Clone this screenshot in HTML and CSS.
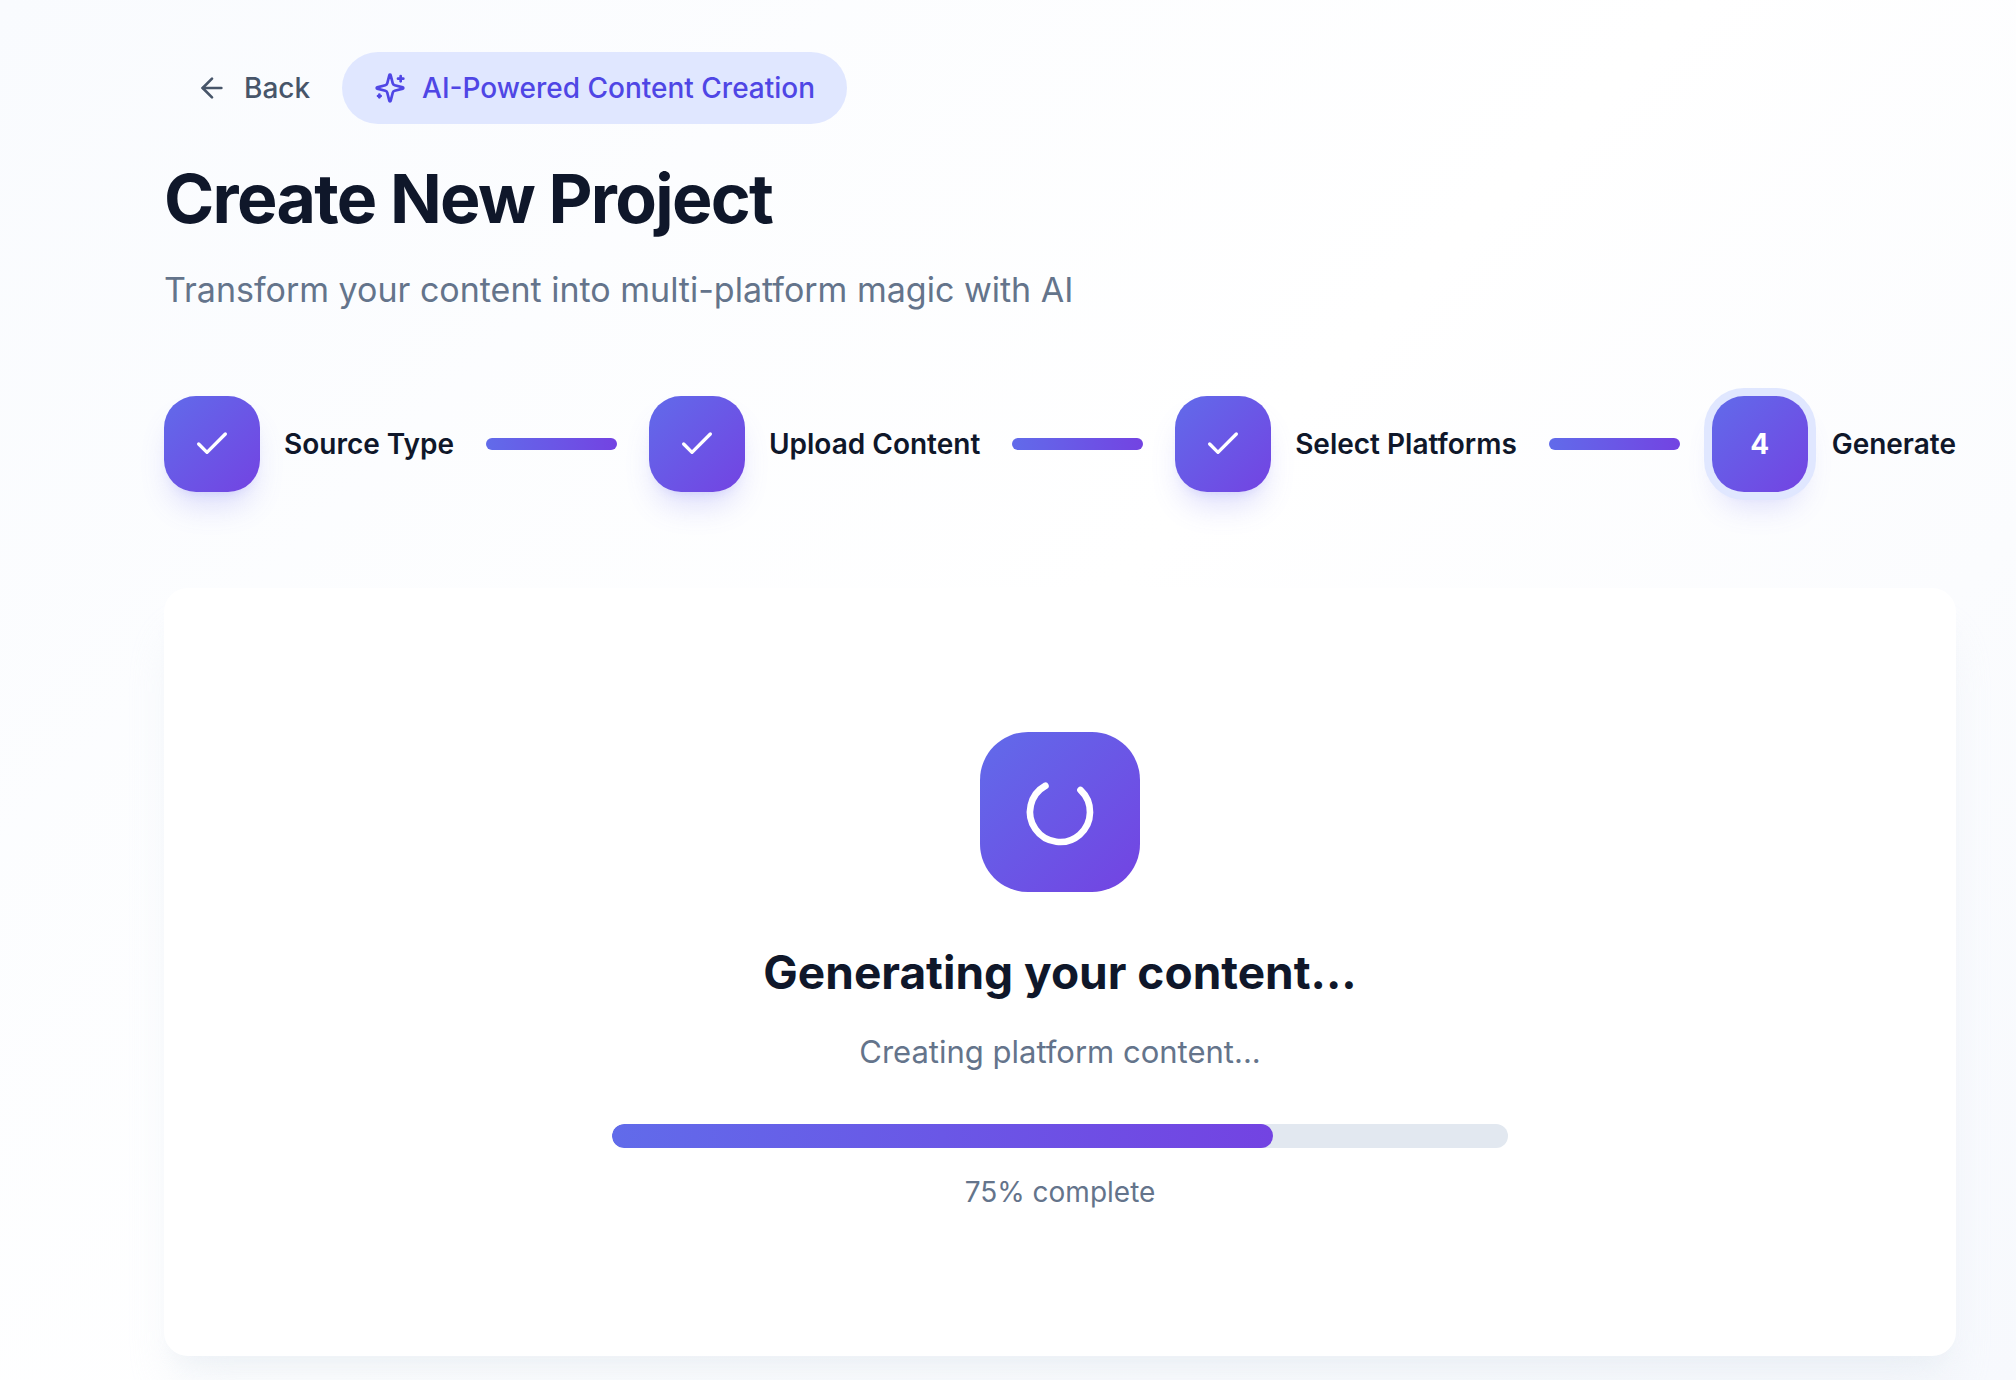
FILE: index.html
```html
<!DOCTYPE html>
<html lang="en">
<head>
<meta charset="utf-8">
<meta name="viewport" content="width=device-width, initial-scale=1">
<title>Create New Project</title>
<link rel="stylesheet" href="styles.css">
</head>
<body>
<main class="page">
  <header class="header">
    <div class="topbar">
      <button type="button" class="back">
        <svg class="icon" viewBox="0 0 24 24" aria-hidden="true"><path d="m12 19-7-7 7-7"/><path d="M19 12H5"/></svg>
        Back
      </button>
      <div class="badge">
        <svg class="icon" viewBox="0 0 24 24" aria-hidden="true"><path d="M9.937 15.5A2 2 0 0 0 8.5 14.063l-6.135-1.582a.5.5 0 0 1 0-.962L8.5 9.936A2 2 0 0 0 9.937 8.5l1.582-6.135a.5.5 0 0 1 .963 0L14.063 8.5A2 2 0 0 0 15.5 9.937l6.135 1.581a.5.5 0 0 1 0 .964L15.5 14.063a2 2 0 0 0-1.437 1.437l-1.582 6.135a.5.5 0 0 1-.963 0z"/><path d="M20 3v4"/><path d="M22 5h-4"/><path d="M4 17v2"/><path d="M5 18H3"/></svg>
        <span>AI-Powered Content Creation</span>
      </div>
    </div>
    <h1 class="title">Create New Project</h1>
    <p class="subtitle">Transform your content into multi-platform magic with AI</p>
  </header>

  <ol class="steps">
    <li class="step">
      <span class="step-mark"><svg class="check" viewBox="0 0 24 24" role="img" aria-label="Done"><path d="M20 6 9 17l-5-5"/></svg></span>
      <span class="step-label">Source Type</span>
      <span class="step-line"></span>
    </li>
    <li class="step">
      <span class="step-mark"><svg class="check" viewBox="0 0 24 24" role="img" aria-label="Done"><path d="M20 6 9 17l-5-5"/></svg></span>
      <span class="step-label">Upload Content</span>
      <span class="step-line"></span>
    </li>
    <li class="step">
      <span class="step-mark"><svg class="check" viewBox="0 0 24 24" role="img" aria-label="Done"><path d="M20 6 9 17l-5-5"/></svg></span>
      <span class="step-label">Select Platforms</span>
      <span class="step-line"></span>
    </li>
    <li class="step step-last" aria-current="step">
      <span class="step-mark step-mark-current">4</span>
      <span class="step-label">Generate</span>
    </li>
  </ol>

  <section class="card">
    <div class="spinner-tile">
      <svg class="spinner" viewBox="0 0 24 24" aria-hidden="true"><path transform="rotate(-47 12 12)" d="M21 12a9 9 0 1 1-6.219-8.56"/></svg>
    </div>
    <h2 class="card-title">Generating your content...</h2>
    <p class="card-text">Creating platform content...</p>
    <div class="progress" role="progressbar" aria-label="Generation progress" aria-valuemin="0" aria-valuemax="100" aria-valuenow="75">
      <div class="progress-fill" style="width: 73.8%"></div>
    </div>
    <p class="progress-text">75% complete</p>
  </section>
</main>
</body>
</html>
```

FILE: styles.css
```css
* {
  box-sizing: border-box;
}

body {
  margin: 0;
  min-height: 100vh;
  background: linear-gradient(135deg, #f9fbfe 0%, #fff 50%, #f7f9fd 100%);
  color: #0f172a;
  font-family: Inter, "Liberation Sans", sans-serif;
  font-size: 28px;
  line-height: 40px;
}

h1, h2, p, ol {
  margin: 0;
  padding: 0;
}

.page {
  padding: 52px 60px 24px 164px;
}

.icon, .check, .spinner {
  flex: none;
  fill: none;
  stroke: currentColor;
  stroke-width: 2;
  stroke-linecap: round;
  stroke-linejoin: round;
}

.icon {
  width: 32px;
  height: 32px;
}

.topbar {
  display: flex;
  align-items: center;
}

.back, .badge {
  display: flex;
  align-items: center;
  gap: 16px;
  height: 72px;
  padding: 0 32px;
  font-weight: 500;
}

.back {
  border: 0;
  background: none;
  color: #475569;
  font-family: inherit;
  font-size: inherit;
  cursor: pointer;
}

.badge {
  border-radius: 36px;
  background: #e0e7ff;
  color: #4f46e5;
}

.title {
  margin-top: 34px;
  font-size: 68px;
  line-height: 80px;
  font-weight: 700;
  letter-spacing: -0.025em;
}

.subtitle {
  margin-top: 24px;
  color: #64748b;
  font-size: 34px;
  line-height: 56px;
}

.steps {
  display: flex;
  margin-top: 78px;
  list-style: none;
}

.step {
  display: flex;
  flex: 1 1 auto;
  align-items: center;
}

.step-last {
  flex: none;
}

.step-mark {
  display: flex;
  flex: none;
  align-items: center;
  justify-content: center;
  width: 96px;
  height: 96px;
  border-radius: 32px;
  background: linear-gradient(135deg, #616bea, #7343e2);
  box-shadow: 0 20px 30px -6px rgba(99, 102, 241, 0.2), 0 8px 12px -8px rgba(99, 102, 241, 0.2);
  color: #fff;
  font-weight: 700;
}

.step-mark-current {
  box-shadow: 0 0 0 8px #e0e7ff, 0 20px 30px -6px rgba(99, 102, 241, 0.2), 0 8px 12px -8px rgba(99, 102, 241, 0.2);
}

.check {
  width: 40px;
  height: 40px;
}

.step-label {
  margin-left: 24px;
  font-weight: 600;
  white-space: nowrap;
}

.step-line {
  flex: 1;
  height: 12px;
  margin: 0 32px;
  border-radius: 6px;
  background: linear-gradient(90deg, #616bea, #7343e2);
}

.card {
  display: flex;
  flex-direction: column;
  align-items: center;
  margin-top: 96px;
  padding: 144px 64px;
  border-radius: 24px;
  background: #fff;
  box-shadow: 0 40px 50px -10px rgba(226, 232, 240, 0.4), 0 16px 20px -12px rgba(226, 232, 240, 0.4);
}

.spinner-tile {
  display: flex;
  align-items: center;
  justify-content: center;
  width: 160px;
  height: 160px;
  border-radius: 48px;
  background: linear-gradient(135deg, #616bea, #7343e2);
  color: #fff;
}

.spinner {
  width: 80px;
  height: 80px;
}

.card-title {
  margin-top: 48px;
  font-size: 46px;
  line-height: 64px;
  font-weight: 700;
}

.card-text {
  margin-top: 24px;
  color: #64748b;
  font-size: 31px;
  line-height: 48px;
}

.progress {
  width: 100%;
  max-width: 896px;
  height: 24px;
  margin-top: 48px;
  overflow: hidden;
  border-radius: 12px;
  background: #e2e8f0;
}

.progress-fill {
  height: 100%;
  border-radius: 12px;
  background: linear-gradient(90deg, #616bea, #7343e2);
}

.progress-text {
  margin-top: 24px;
  color: #64748b;
}
```
